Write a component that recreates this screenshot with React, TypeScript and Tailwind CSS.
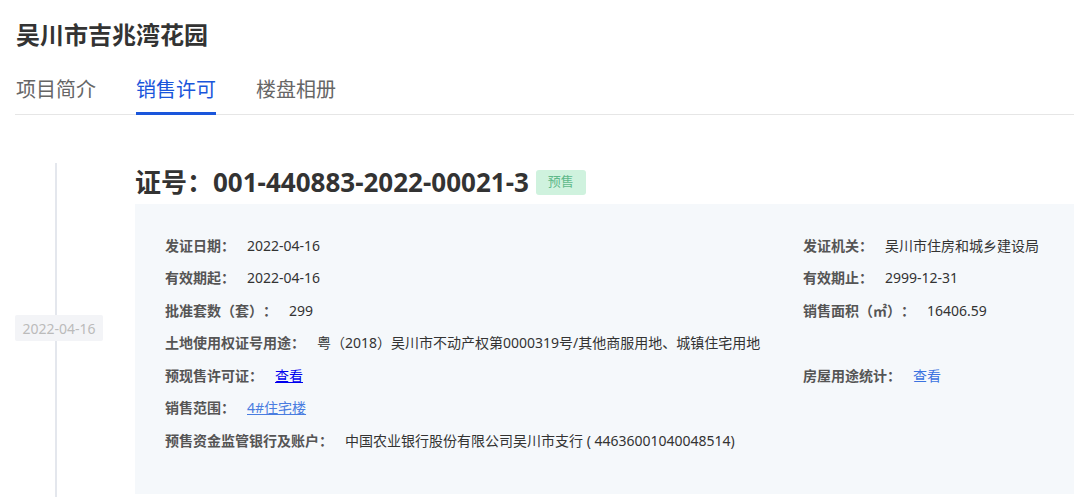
import React from 'react';

type Field = { label: string; value: React.ReactNode };

const font = { fontFamily: '"Noto Sans", "Noto Sans CJK SC", sans-serif' };

const Row: React.FC<{ left: Field; right?: Field }> = ({ left, right }) => (
  <div className="flex h-[32.5px] items-center">
    <div className="w-[638px] shrink-0 flex items-center">
      <span className="text-[14px] font-bold text-[#555]">{left.label}</span>
      <span className="ml-[12px] text-[14px] text-[#333] whitespace-nowrap">{left.value}</span>
    </div>
    {right && (
      <div className="flex items-center">
        <span className="text-[14px] font-bold text-[#555]">{right.label}</span>
        <span className="ml-[12px] text-[14px] text-[#333] whitespace-nowrap">{right.value}</span>
      </div>
    )}
  </div>
);

export default function App() {
  return (
    <div className="bg-white min-h-[497px] overflow-hidden pl-[15px] [text-spacing-trim:space-all]" style={font}>
      <h1 className="pt-[19px] pl-[1px] text-[24px] leading-[32px] font-bold text-[#333]">吴川市吉兆湾花园</h1>

      <div className="mt-[25px] flex gap-[40px] border-b border-[#e6e6e6] pl-[1px]">
        <div className="pb-[8px] text-[20px] leading-[28px] text-[#666]">项目简介</div>
        <div className="pb-[8px] text-[20px] leading-[28px] text-[#1a56db] border-b-[3px] border-[#1a56db] -mb-[1px]">销售许可</div>
        <div className="pb-[8px] text-[20px] leading-[28px] text-[#666]">楼盘相册</div>
      </div>

      <div className="mt-[48px] flex pb-[4px]">
        <div className="relative w-[120px] shrink-0 flex items-center">
          <div className="absolute left-[40px] top-0 -bottom-[10px] w-[2px] bg-[#e4e7ed]" />
          <div className="relative h-[26px] w-[88px] flex items-center justify-center rounded-[2px] bg-[#f3f4f7] text-[14px] text-[#bbb]">
            2022-04-16
          </div>
        </div>

        <div className="flex-1">
          <div className="h-[41px] pb-[3px] flex items-center gap-[7px]">
            <span className="text-[26px] font-bold text-[#333] leading-none">证号：001-440883-2022-00021-3</span>
            <span className="h-[25px] w-[50px] flex items-center justify-center rounded-[3px] bg-[#cff2de] text-[13px] text-[#5fb98a]">预售</span>
          </div>

          <div className="bg-[#f5f8fb] pl-[30px] pt-[25px] pb-[37px]">
            <Row left={{ label: '发证日期：', value: '2022-04-16' }} right={{ label: '发证机关：', value: '吴川市住房和城乡建设局' }} />
            <Row left={{ label: '有效期起：', value: '2022-04-16' }} right={{ label: '有效期止：', value: '2999-12-31' }} />
            <Row left={{ label: '批准套数（套）：', value: '299' }} right={{ label: '销售面积（㎡）：', value: '16406.59' }} />
            <Row left={{ label: '土地使用权证号用途：', value: '粤（2018）吴川市不动产权第0000319号/其他商服用地、城镇住宅用地' }} />
            <Row
              left={{ label: '预现售许可证：', value: <a href="#" className="text-[#0000ee] underline">查看</a> }}
              right={{ label: '房屋用途统计：', value: <a href="#" className="text-[#3b73e0]">查看</a> }}
            />
            <Row left={{ label: '销售范围：', value: <a href="#" className="text-[#4a7de0] underline">4#住宅楼</a> }} />
            <Row left={{ label: '预售资金监管银行及账户：', value: '中国农业银行股份有限公司吴川市支行 ( 44636001040048514)' }} />
          </div>
        </div>
      </div>
    </div>
  );
}
